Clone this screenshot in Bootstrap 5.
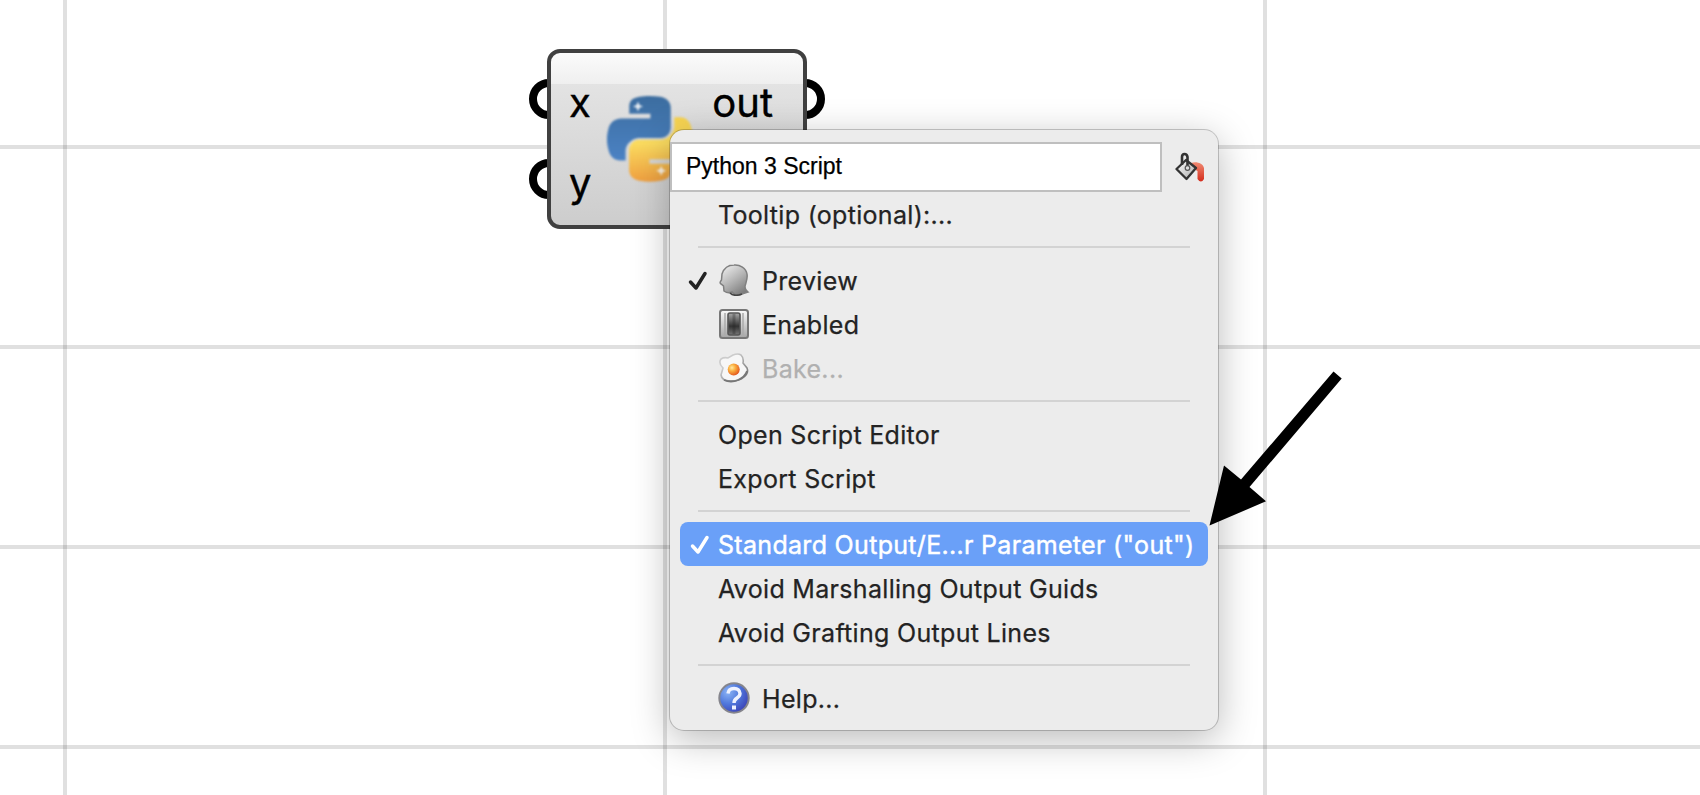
<!DOCTYPE html>
<html lang="en">
<head>
<meta charset="utf-8">
<title>Script component menu</title>
<link href="https://cdn.jsdelivr.net/npm/bootstrap@5.3.0/dist/css/bootstrap.min.css" rel="stylesheet">
<script src="https://cdn.jsdelivr.net/npm/bootstrap@5.3.0/dist/js/bootstrap.bundle.min.js"></script>
<style>
  body { font-family: Inter, "Liberation Sans", sans-serif; background: #fff; }
  .canvas {
    width: 1700px; height: 795px;
    background-image:
      repeating-linear-gradient(to right, rgba(0,0,0,.12) 0 4px, transparent 4px 600px),
      repeating-linear-gradient(to bottom, rgba(0,0,0,.12) 0 4px, transparent 4px 200px);
    background-position: 63px 0, 0 145px;
  }
  .ports { left: 0; top: 0; }
  .node {
    left: 547px; top: 49px; width: 260px; height: 180px;
    border: 4px solid #404040; border-radius: 13px;
    background: linear-gradient(#fbfbfb, #efefef 31px, #e3e3e3 31px, #cdcdcd);
    color: #000; font-size: 40px; line-height: 48px; -webkit-text-stroke: .4px;
  }
  .node-in { padding: 26px 0 0 18px; }
  .node-in span { height: 80px; flex: none; }
  .node-out { padding: 26px 30px 0 0; }
  .node-logo { left: 56px; top: 43px; filter: blur(1px); }
  .menu {
    left: 670px; top: 130px; width: 548px; height: 600px;
    background: #ececec; border-radius: 14px; color: #232323;
    box-shadow: 0 0 0 1px rgba(0,0,0,.2), 0 9px 38px rgba(0,0,0,.28);
    font-size: 25px; letter-spacing: .31px; -webkit-text-stroke: .25px;
  }
  .name-row { padding-top: 12px; height: 62px; }
  .name-field {
    width: 492px; height: 50px; border: 2px solid #bfbfbf; border-radius: 0; background: #fff; color: #000;
    font: 23px/44px "Liberation Sans", sans-serif; padding: 0 0 0 14px; letter-spacing: 0;
  }
  .tool { margin: 9px 0 0 12px; }
  .entry { height: 44px; margin: 0 10px; border-radius: 8px; white-space: nowrap; }
  .entry > span:last-child { padding-top: 4px; }
  .tick { width: 38px; flex: none; padding: 2px 0 0 8px; }
  .entry.picked { background: #6aa0f8; color: #fff; -webkit-text-stroke: .45px; }
  .entry.picked .tick { padding-left: 10px; }
  .entry.off { color: #b0b0b0; }
  .entry .pic { margin-right: 12px; }
  .rule { height: 2px; margin: 10px 28px; background: #d3d3d3; }
  .pic, .tool { filter: blur(.6px); }
  .tick svg, .pic, .tool, .node-logo { display: block; }
  .pointer { left: 1200px; top: 360px; }
</style>
</head>
<body>
<main class="canvas position-relative overflow-hidden">
  <svg class="ports position-absolute" width="900" height="240" fill="#fff" stroke="#000" stroke-width="8">
    <circle cx="549" cy="99" r="16"/><circle cx="549" cy="179" r="16"/><circle cx="805" cy="99" r="16"/>
  </svg>

  <section class="node position-absolute d-flex justify-content-between">
    <div class="node-in d-flex flex-column"><span>x</span><span>y</span></div>
    <svg class="node-logo position-absolute" width="86" height="86" viewBox="0 0 111 111">
      <defs>
        <linearGradient id="pb" x1="0" y1="0" x2="0" y2="1"><stop offset="0" stop-color="#3c6d9f"/><stop offset="1" stop-color="#4b82c4"/></linearGradient>
        <linearGradient id="py" x1="0" y1="1" x2="0" y2="0"><stop offset="0" stop-color="#f8d34e"/><stop offset=".4" stop-color="#fbdc60"/><stop offset="1" stop-color="#f0a040"/></linearGradient>
      </defs>
      <path fill="url(#pb)" d="M54.9 0C50.3 0 45.9.4 42.1 1.1 30.8 3.1 28.7 7.3 28.7 15V23H56V29H18.6C10.800 29 4 33.300 1.800 42.200C-.7 52.400-.8 58.800 1.800 69.500C3.700 77.400 8.300 83.100 16.100 83.100H24V70.800C24 61.900 33 54.100 42.100 54.100H68.900C76.300 54.100 82.300 48 82.300 40.500V15C82.300 7.700 76.200 2.300 68.900 1.100C64.300.3 59.500 0 54.900 0z"/>
      <path fill="url(#py)" transform="rotate(180 55.4 55.3)" d="M54.9 0C50.3 0 45.9.4 42.1 1.1 30.8 3.1 28.7 7.3 28.7 15V23H56V29H18.6C10.800 29 4 33.300 1.800 42.200C-.7 52.400-.8 58.800 1.800 69.500C3.700 77.400 8.300 83.100 16.100 83.100H24V70.800C24 61.900 33 54.100 42.100 54.100H68.900C76.300 54.100 82.300 48 82.300 40.500V15C82.300 7.700 76.200 2.300 68.900 1.100C64.300.3 59.500 0 54.900 0z"/>
      <path fill="#fff" fill-opacity=".9" d="M40 7l1.800 4.700 4.700 1.800-4.700 1.800-1.800 4.700-1.800-4.700-4.700-1.800 4.700-1.800zM70 90l1.800 4.700 4.700 1.800-4.700 1.800-1.800 4.700-1.800-4.700-4.700-1.800 4.700-1.800z"/>
    </svg>
    <div class="node-out">out</div>
  </section>

  <nav class="menu position-absolute">
    <div class="name-row d-flex">
      <div class="name-field">Python 3 Script</div>
      <svg class="tool" width="32" height="32" viewBox="0 0 32 32">
        <defs><linearGradient id="red" x1="0" y1="0" x2="0" y2="1"><stop offset="0" stop-color="#f08a72"/><stop offset="1" stop-color="#d42c1c"/></linearGradient>
        <linearGradient id="pail" x1="0" y1="0" x2="1" y2="1"><stop offset="0" stop-color="#fff"/><stop offset="1" stop-color="#aaa"/></linearGradient></defs>
        <path d="M17 12C22 10 29 12 30 17V28Q27 33 23.500 28V20L18 17z" fill="url(#red)"/>
        <path d="M2.500 18L12 9l10 8-9.500 11z" fill="url(#pail)" stroke="#333" stroke-width="2.300" stroke-linejoin="round"/>
        <path d="M8 14V6Q8 3 10.500 3T13.500 6v9" fill="none" stroke="#333" stroke-width="2.600"/>
        <circle cx="13.500" cy="17" r="2.300" fill="#ddd" stroke="#555" stroke-width="1.200"/>
      </svg>
    </div>

    <div class="entry d-flex align-items-center"><span class="tick"></span><span>Tooltip (optional):...</span></div>
    <div class="rule"></div>

    <div class="entry d-flex align-items-center">
      <span class="tick"><svg width="20" height="20" viewBox="0 0 20 20" fill="none" stroke="#232323" stroke-width="3.500" stroke-linecap="round" stroke-linejoin="round"><path d="M2.500 11L8 17 17 2.500"/></svg></span>
      <svg class="pic" width="32" height="32" viewBox="0 0 32 32">
        <defs><linearGradient id="head" x1=".2" y1=".1" x2=".8" y2="1"><stop offset="0" stop-color="#e4e4e4"/><stop offset=".45" stop-color="#b5b5b5"/><stop offset="1" stop-color="#777"/></linearGradient></defs>
        <path d="M16 1C22 .5 28 4 29 10C30 16 27 20 27 23Q27 26 30 28L24 30Q18 33 14 28Q10 30 6 27L5.500 22 3 20Q1 19 3.500 16L4 10C6 4 10 1 16 1z" fill="url(#head)" stroke="#808080" stroke-width="1.500"/>
        <path d="M12 29Q16 33 24 30" fill="none" stroke="#444" stroke-width="1.600"/>
      </svg><span>Preview</span>
    </div>
    <div class="entry d-flex align-items-center"><span class="tick"></span>
      <svg class="pic" width="32" height="32" viewBox="0 0 32 32">
        <defs><linearGradient id="plate" x1="0" y1="0" x2="0" y2="1"><stop offset="0" stop-color="#fafafa"/><stop offset="1" stop-color="#a5a5a5"/></linearGradient>
        <linearGradient id="knob" x1="0" y1="0" x2="0" y2="1"><stop offset="0" stop-color="#aaa"/><stop offset=".25" stop-color="#777"/><stop offset=".6" stop-color="#333"/><stop offset="1" stop-color="#777"/></linearGradient></defs>
        <rect x="2" y="2" width="28" height="28" rx="2.500" fill="url(#plate)" stroke="#777" stroke-width="2"/>
        <path d="M7 5v22M25 5v22" stroke="#aaa" stroke-width="1.500"/>
        <rect x="10" y="5" width="12" height="22" rx="2" fill="url(#knob)" stroke="#555" stroke-width="1.600"/>
        <path d="M16 6v20" stroke="#222" stroke-opacity=".3" stroke-width="3"/>
      </svg><span>Enabled</span>
    </div>
    <div class="entry off d-flex align-items-center"><span class="tick"></span>
      <svg class="pic" width="32" height="32" viewBox="0 0 32 32">
        <defs><radialGradient id="yolk" cx=".35" cy=".35" r=".7"><stop offset="0" stop-color="#ffe9a0"/><stop offset=".4" stop-color="#fbb040"/><stop offset="1" stop-color="#e2541c"/></radialGradient>
        <linearGradient id="rim" x1="0" y1="0" x2="1" y2="1"><stop offset=".3" stop-color="#ccc"/><stop offset="1" stop-color="#666"/></linearGradient></defs>
        <path d="M15 3Q20 1 23 3Q26 6 25 11L29 16Q31 21 26 25Q20 30 12 29Q4 29 3 23L5 16Q0 11 3 7Q6 5 10 6z" fill="#f7f7f7" stroke="url(#rim)" stroke-width="1.600"/>
        <path d="M29 19Q27 25 20 28T6 28" fill="none" stroke="#777" stroke-width="1.800"/>
        <circle cx="15.700" cy="17.500" r="6" fill="url(#yolk)"/>
      </svg><span>Bake...</span>
    </div>
    <div class="rule"></div>

    <div class="entry d-flex align-items-center"><span class="tick"></span><span>Open Script Editor</span></div>
    <div class="entry d-flex align-items-center"><span class="tick"></span><span>Export Script</span></div>
    <div class="rule"></div>

    <div class="entry picked d-flex align-items-center">
      <span class="tick"><svg width="20" height="20" viewBox="0 0 20 20" fill="none" stroke="#fff" stroke-width="3.500" stroke-linecap="round" stroke-linejoin="round"><path d="M2.500 11L8 17 17 2.500"/></svg></span>
      <span>Standard Output/E...r Parameter ("out")</span>
    </div>
    <div class="entry d-flex align-items-center"><span class="tick"></span><span>Avoid Marshalling Output Guids</span></div>
    <div class="entry d-flex align-items-center"><span class="tick"></span><span>Avoid Grafting Output Lines</span></div>
    <div class="rule"></div>

    <div class="entry d-flex align-items-center"><span class="tick"></span>
      <svg class="pic" width="32" height="32" viewBox="0 0 32 32">
        <defs><radialGradient id="orb" cx=".3" cy=".3" r=".8"><stop offset="0" stop-color="#8bb4f5"/><stop offset=".5" stop-color="#5078dc"/><stop offset="1" stop-color="#3a3fb4"/></radialGradient></defs>
        <circle cx="16" cy="16" r="14.700" fill="url(#orb)" stroke="#85858c" stroke-width="2"/>
        <path d="M10 11.500Q10.500 6.500 16 6.500T22 11.500Q22 14 19 16T16 21" fill="none" stroke="#eef2ff" stroke-width="3.400"/>
        <rect x="14" y="23.500" width="4" height="4" fill="#eef2ff"/>
      </svg><span>Help...</span>
    </div>
  </nav>

  <svg class="pointer position-absolute" width="150" height="170" viewBox="1200 360 150 170">
    <path d="M1209.500 525.500L1224 465.500 1241 479.500 1333.500 371.500 1341.700 378.500 1249.500 487 1266 501.300z"/>
  </svg>
</main>
</body>
</html>
